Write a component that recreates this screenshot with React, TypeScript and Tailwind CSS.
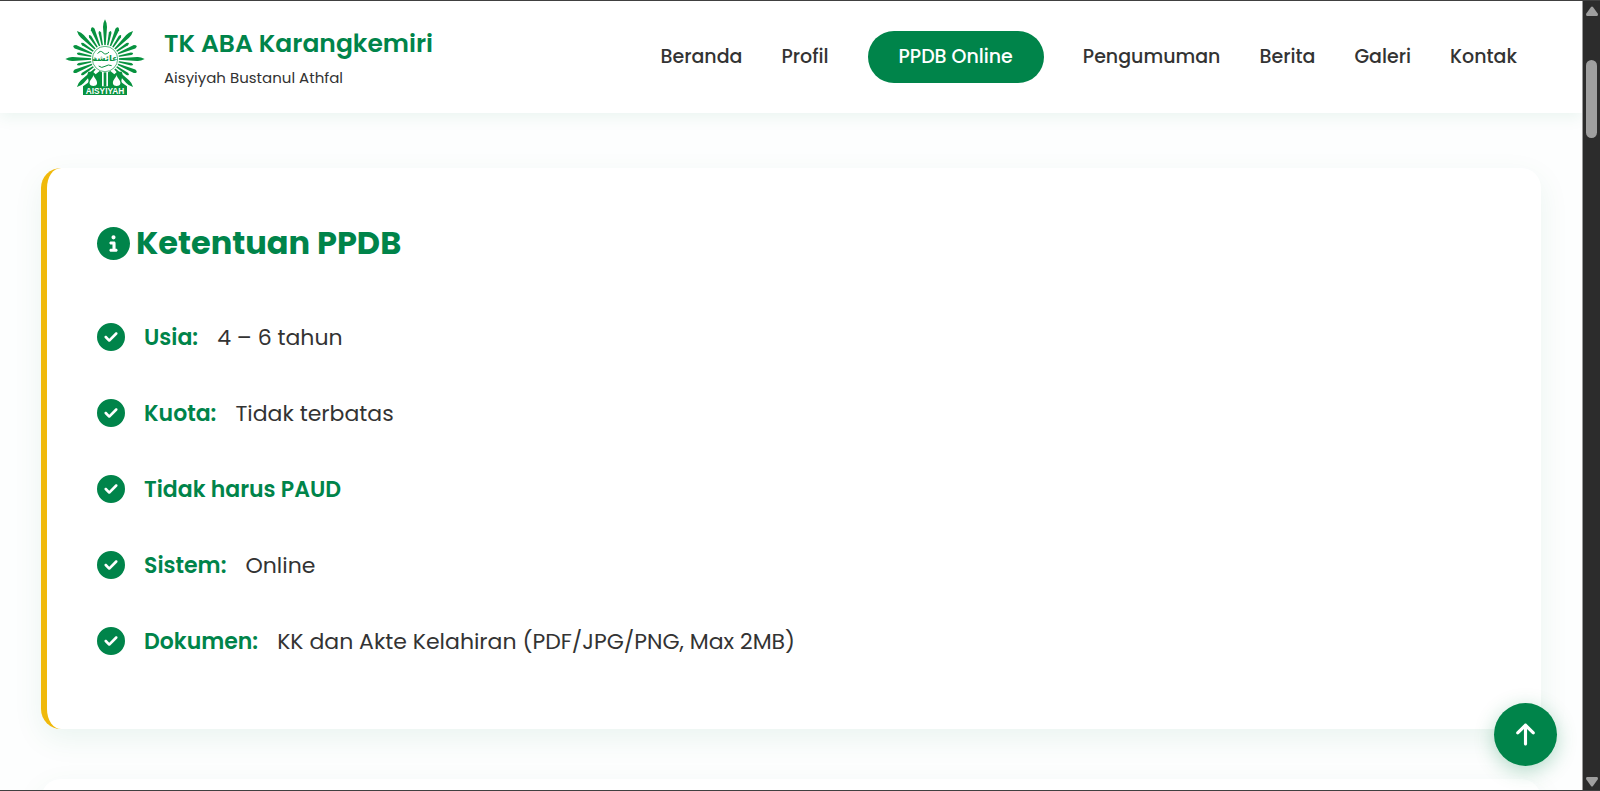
import { FaArrowUp, FaCircleCheck, FaCircleInfo } from "react-icons/fa6";
import clsx from "clsx";

const links = [
  "Beranda",
  "Profil",
  "PPDB Online",
  "Pengumuman",
  "Berita",
  "Galeri",
  "Kontak",
];

const requirements = [
  { label: "Usia:", value: "4 – 6 tahun" },
  { label: "Kuota:", value: "Tidak terbatas" },
  { label: "Tidak harus PAUD", value: "" },
  { label: "Sistem:", value: "Online" },
  { label: "Dokumen:", value: "KK dan Akte Kelahiran (PDF/JPG/PNG, Max 2MB)" },
];

const LONG_RAY = "M-2 -40 L-6 -96 Q-7 -106 0 -119 Q7 -106 6 -96 L2 -40 Z";
const MID_RAY = "M-2 -40 L-6 -96 Q0 -110 6 -96 L2 -40 Z";
const SHORT_RAY = "M-2 -40 L-4 -80 Q0 -92 4 -80 L2 -40 Z";

const Logo = () => {
  const rays = Array.from({ length: 32 }, (_, i) => i);
  return (
    <svg
      viewBox="0 0 240 228"
      className="w-20 h-[76px]"
      fill="#07923f"
      role="img"
      aria-label="Logo Aisyiyah">
      {rays
        .filter((i) => i < 13 || i > 19)
        .map((i) => (
          <path
            key={i}
            d={i % 4 === 0 ? LONG_RAY : i % 2 === 0 ? MID_RAY : SHORT_RAY}
            transform={`translate(120 120) rotate(${i * 11.25})`}
          />
        ))}
      <circle cx="120" cy="120" r="42" fill="#fff" />
      <circle cx="120" cy="120" r="38" fill="none" stroke="#07923f" strokeWidth="2" />
      <text
        x="120"
        y="127"
        textAnchor="middle"
        fontFamily="DejaVu Sans, sans-serif"
        fontWeight="700"
        fontSize="25">
        عائشة
      </text>
      <path
        d="M98 104 Q106 92 114 101 T132 99 M101 141 Q110 149 120 142 T140 140"
        fill="none"
        stroke="#07923f"
        strokeWidth="3"
      />
      <path d="M54 228 V202 L68 192 C76 184 62 172 70 158 L84 158 L92 166 L104 156 L111 160 V202 H129 V160 L136 156 L148 166 L156 158 L170 158 C178 172 164 184 172 192 L186 202 V228 Z" />
      <path d="M120 160 V202" stroke="#07923f" strokeWidth="8" />
      <path
        d="M85 168 C84 178 72 184 74 194 C76 203 94 203 96 194 C98 184 88 178 85 168 Z M155 168 C152 178 142 184 144 194 C146 203 164 203 166 194 C168 184 156 178 155 168 Z"
        fill="#fff"
      />
      <text
        x="120"
        y="224"
        textAnchor="middle"
        fill="#fff"
        fontFamily="Liberation Sans, sans-serif"
        fontWeight="700"
        fontSize="25">
        AISYIYAH
      </text>
    </svg>
  );
};

const Header = () => (
  <header className="relative shrink-0 bg-white shadow-[0_4px_15px_rgba(0,132,74,0.08)]">
    <div className="max-w-[1500px] mx-auto px-6 h-28 flex items-center justify-between">
      <a href="#beranda" className="flex items-center gap-[19px]">
        <Logo />
        <div className="flex flex-col pt-1.5">
          <span className="text-[25px] leading-9 font-semibold text-[#00844a]">
            TK ABA Karangkemiri
          </span>
          <span className="text-[15px] leading-8">Aisyiyah Bustanul Athfal</span>
        </div>
      </a>
      <nav className="flex items-center gap-[39px] text-[19px] font-medium">
        {links.map((link) => (
          <a
            key={link}
            href="#"
            className={clsx(
              "leading-[52px]",
              link === "PPDB Online" &&
                "px-[31px] rounded-full bg-[#00844a] text-white"
            )}>
            {link}
          </a>
        ))}
      </nav>
    </div>
  </header>
);

const Requirements = () => (
  <section className="rounded-[20px] border-l-6 border-[#f0b90b] bg-white p-[50px] shadow-[0_10px_30px_rgba(0,132,74,0.08)]">
    <h2 className="flex items-center gap-1.5 h-[50px] text-[32px] font-bold text-[#00844a]">
      <FaCircleInfo className="size-[33px]" />
      Ketentuan PPDB
    </h2>
    <ul className="mt-[31px]">
      {requirements.map((item) => (
        <li key={item.label} className="flex items-center gap-[19px] h-19 text-[22px]">
          <FaCircleCheck className="size-7 text-[#00844a]" />
          <strong className="font-semibold text-[#00844a]">{item.label}</strong>
          {item.value && <span>{item.value}</span>}
        </li>
      ))}
    </ul>
  </section>
);

const Scrollbar = () => (
  <div className="w-[18px] shrink-0 flex flex-col items-center border-l border-[#9a9a9a] bg-[#2c2c2c]">
    <svg viewBox="0 0 12 10" className="w-3 h-[10px] mt-[5px] fill-[#9f9f9f]">
      <path d="M5 1 Q6 0 7 1 L12 8 Q12 10 11 10 H1 Q0 10 0 8 Z" />
    </svg>
    <div className="mt-11 h-[78px] w-[11px] rounded-full bg-[#9f9f9f]" />
    <svg viewBox="0 0 12 10" className="w-3 h-[10px] mt-auto mb-[3px] fill-[#9f9f9f]">
      <path d="M5 9 Q6 10 7 9 L12 2 Q12 0 11 0 H1 Q0 0 0 2 Z" />
    </svg>
  </div>
);

const App = () => {
  return (
    <div className="h-screen flex overflow-hidden border-y border-[#404040] font-['Poppins','Inter',sans-serif] text-[#333333]">
      <div className="flex-1 min-w-0 flex flex-col overflow-hidden bg-[#fdfefe]">
        <Header />
        <main className="w-full max-w-[1500px] mx-auto pt-[55px] flex flex-col gap-[50px]">
          <Requirements />
          <section className="h-40 shrink-0 rounded-[20px] bg-white shadow-[0_10px_30px_rgba(0,132,74,0.08)]" />
        </main>
      </div>
      <Scrollbar />
      <button
        type="button"
        aria-label="Kembali ke atas"
        className="fixed right-[43px] bottom-[25px] size-[63px] rounded-full flex items-center justify-center bg-[#00844a] text-white shadow-[0_5px_20px_rgba(0,132,74,0.3)]">
        <FaArrowUp className="size-[25px]" />
      </button>
    </div>
  );
};

export default App;
